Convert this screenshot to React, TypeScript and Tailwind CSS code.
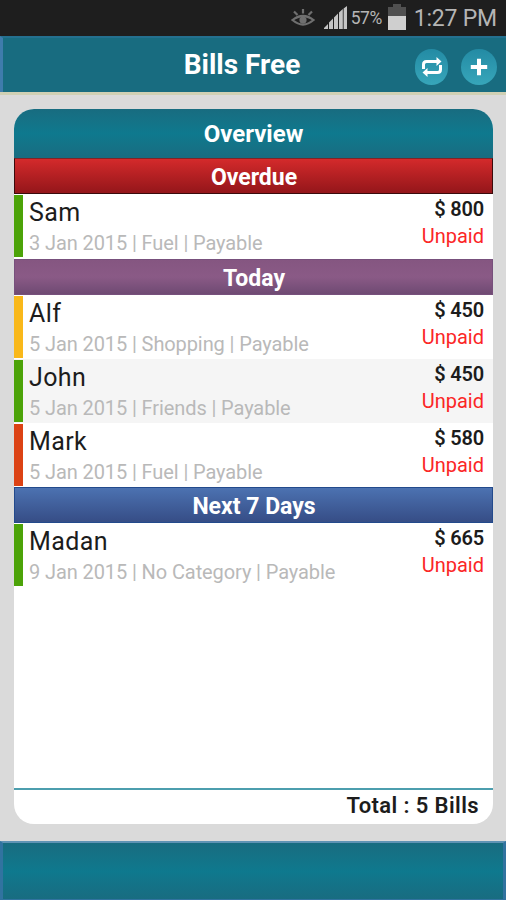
import clsx from "clsx";

interface Bill {
  name: string;
  date: string;
  category: string;
  amount: number;
  color: string;
  shaded?: boolean;
}

interface Section {
  title: string;
  header: string;
  bills: Bill[];
}

const sections: Section[] = [
  {
    title: "Overdue",
    header: "border-x border-y border-[#3a0b0c] border-t-[#7d2428] bg-linear-to-b from-[#d42a2b] to-[#94161a]",
    bills: [{ name: "Sam", date: "3 Jan 2015", category: "Fuel", amount: 800, color: "bg-[#4ca308]" }],
  },
  {
    title: "Today",
    header: "mt-px border border-[#77507c] bg-linear-to-b from-[#855681] via-[#8a5a86] to-[#6f4a73]",
    bills: [
      { name: "Alf", date: "5 Jan 2015", category: "Shopping", amount: 450, color: "bg-[#f9b81a]" },
      { name: "John", date: "5 Jan 2015", category: "Friends", amount: 450, color: "bg-[#4ca308]", shaded: true },
      { name: "Mark", date: "5 Jan 2015", category: "Fuel", amount: 580, color: "bg-[#dc4214]" },
    ],
  },
  {
    title: "Next 7 Days",
    header: "border border-[#234a8c] bg-linear-to-b from-[#4c72b1] to-[#364d86]",
    bills: [{ name: "Madan", date: "9 Jan 2015", category: "No Category", amount: 665, color: "bg-[#4ca308]" }],
  },
];

function StatusBar() {
  return (
    <div className="h-9 shrink-0 bg-[#1e1e1e] flex items-center justify-end pr-[9px] text-[#b5b5b5]">
      <svg width="24" height="20" viewBox="0 0 24 20" fill="none" stroke="#6f6f6f" strokeWidth="2.200" className="mr-[9px]">
        <path d="M1.500 12Q12 4 22.500 12Q12 21 1.500 12Z" />
        <path d="M3 3.500l3.500 3.500M12 1v4.500M21 3.500l-3.500 3.500" />
        <circle cx="12" cy="12" r="3.600" fill="#6f6f6f" stroke="none" />
      </svg>
      <svg width="24" height="23" viewBox="0 0 24 23" fill="#c4c4c4" className="mr-[3px] mb-px">
        <path d="M0 23v-1l4-4v5zM5 23v-6.500l4-4v10.500zM10 23V11.500L14 7.500v15.500zM15 23V6.500L18.800 3v20zM19.600 23V2.500L23 0v23z" />
      </svg>
      <span className="w-[33px] text-[17.500px] leading-9 tracking-[-0.500px] whitespace-nowrap">57%</span>
      <svg width="18" height="26" viewBox="0 0 18 26" className="ml-[4px] mr-[8px] mb-[2px]">
        <path d="M5 0h8v3h5v9H0V3h5z" fill="#505050" />
        <path d="M0 12h18v14H0z" fill="#cfcfcf" />
      </svg>
      <span className="pt-px text-[23px] leading-[35px] tracking-[-0.200px] whitespace-nowrap">1:27 PM</span>
    </div>
  );
}

function TitleBar() {
  return (
    <header className="relative h-[56px] shrink-0 border-t-2 border-l-3 border-t-[#24708f] border-l-[#3f7cac] bg-[#186c80] flex items-center justify-end gap-[13px] pt-[3px] pr-[9px]">
      <h1 className="absolute inset-x-0 top-[2px] text-center text-[28px] leading-[50px] font-bold text-white pr-[25px]">Bills Free</h1>
      <button className="relative w-[33px] h-9 rounded-full bg-linear-to-b from-[#238ba4] to-[#37a6ba] flex items-center justify-center">
        <svg width="22" height="22" viewBox="0 0 22 22" fill="none" stroke="#fff" strokeWidth="3">
          <path d="M2.500 13V8.500q0-3 3-3H16M19.500 9v4.500q0 3-3 3H6" />
          <path d="M15.500 1l5 4.500-5 4.500zM6.500 12l-5 4.500 5 4.500z" fill="#fff" stroke="none" />
        </svg>
      </button>
      <button className="relative size-9 rounded-full bg-linear-to-b from-[#238ba4] to-[#37a6ba] flex items-center justify-center">
        <svg width="18" height="18" viewBox="0 0 18 18" stroke="#fff" strokeWidth="4">
          <path d="M9 .8v16.400M.8 9h16.400" />
        </svg>
      </button>
    </header>
  );
}

function BillRow({ bill }: { bill: Bill }) {
  return (
    <div className={clsx("h-16 flex py-px", bill.shaded && "bg-[#f5f5f5]")}>
      <div className={clsx("w-[9px] h-full shrink-0", bill.color)} />
      <div className="flex-1 pt-px pl-[6px] whitespace-nowrap">
        <div className="text-[25px] leading-[33px] tracking-[0.4px] text-[#1c1c1c]">{bill.name}</div>
        <div className="text-[20px] leading-[28px] tracking-[-0.1px] text-[#b9b9b9]">
          {bill.date} | {bill.category} | Payable
        </div>
      </div>
      <div className="pt-px pr-[9px] text-right text-[20px] leading-[27px]">
        <div className="font-semibold tracking-[-0.2px] text-[#1c1c1c]">$ {bill.amount}</div>
        <div className="text-[#fb2626]">Unpaid</div>
      </div>
    </div>
  );
}

export default function App() {
  return (
    <div className="h-[900px] w-[506px] flex flex-col bg-[#dadada] font-[Roboto,sans-serif] overflow-hidden">
      <StatusBar />
      <TitleBar />
      <main className="flex-1 min-h-0 border-t-3 border-[#d0d0b4] pt-[14px] pb-[17px] pl-[14px] pr-[13px] flex">
        <div className="flex-1 rounded-[20px] bg-white overflow-hidden flex flex-col">
          <h2 className="h-[49px] shrink-0 bg-linear-to-b from-[#186c80] via-[#0e798e] to-[#186c80] text-center text-[24px] leading-[51px] font-bold text-white">
            Overview
          </h2>
          {sections.map((section) => (
            <section key={section.title}>
              <h3 className={clsx("h-9 pl-px text-center text-[23px] leading-[37px] font-bold text-white", section.header)}>
                {section.title}
              </h3>
              {section.bills.map((bill) => (
                <BillRow key={bill.name} bill={bill} />
              ))}
            </section>
          ))}
          <div className="mt-auto h-9 shrink-0 border-t-2 border-[#4c9eae] pr-[14px] text-right text-[22px] leading-[32px] font-semibold tracking-[0.4px] text-[#1c1c1c]">
            Total : 5 Bills
          </div>
        </div>
      </main>
      <footer className="h-[59px] shrink-0 border-t-2 border-x-3 border-b border-[#3173a0] border-t-[#5f93b4] bg-linear-to-b from-[#186c80] via-[#0e798e] to-[#186c80]" />
    </div>
  );
}
